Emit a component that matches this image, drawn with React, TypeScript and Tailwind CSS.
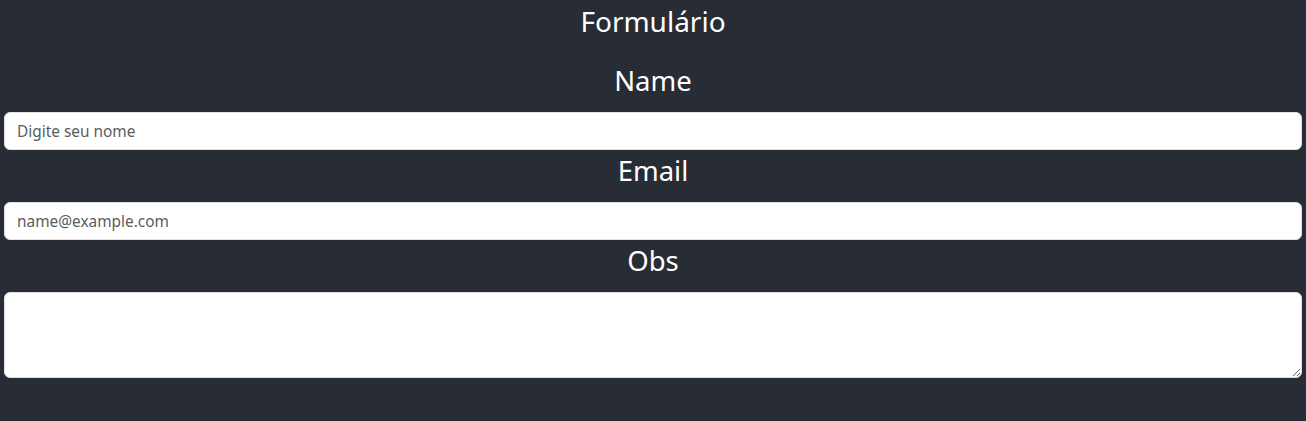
export default function App() {
  return (
    <div className="min-h-[421px] bg-[#282c34] px-[4px] pb-[43px] text-white font-['Noto_Sans',sans-serif]">
      <h1 className="h-[42px] text-center text-[28px] leading-[42px]">Formulário</h1>
      <form className="mt-[18px] flex flex-col">
        <label htmlFor="name" className="mb-[10px] block h-[42px] text-center text-[27.5px] leading-[42px]">
          Name
        </label>
        <input
          id="name"
          type="text"
          placeholder="Digite seu nome"
          className="h-[38px] w-full rounded-[6px] border border-[#dee2e6] bg-white px-[12px] text-[15.4px] text-[#212529] placeholder:text-[#595c5f] outline-none"
        />
        <label htmlFor="email" className="mb-[10px] block h-[42px] text-center text-[27.5px] leading-[42px]">
          Email
        </label>
        <input
          id="email"
          type="email"
          placeholder="name@example.com"
          className="h-[38px] w-full rounded-[6px] border border-[#dee2e6] bg-white px-[12px] text-[15.4px] text-[#212529] placeholder:text-[#595c5f] outline-none"
        />
        <label htmlFor="obs" className="mb-[10px] block h-[42px] text-center text-[27.5px] leading-[42px]">
          Obs
        </label>
        <textarea
          id="obs"
          className="block h-[86px] w-full rounded-[6px] border border-[#dee2e6] bg-white px-[12px] py-[6px] text-[15.4px] text-[#212529] outline-none"
        />
      </form>
    </div>
  )
}
